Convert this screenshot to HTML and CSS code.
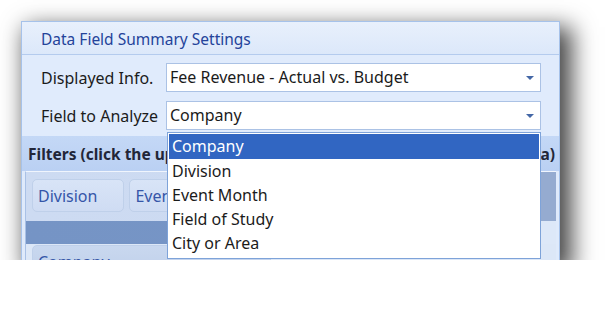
FILE: index.html
```html
<!DOCTYPE html>
<html lang="en">
<head>
  <meta charset="UTF-8">
  <meta name="viewport" content="width=device-width, initial-scale=1.0">
  <title>Data Field Summary Settings</title>
  <link rel="stylesheet" href="styles.css">
</head>
<body>
  <!-- Settings panel -->
  <div class="panel">
    <div class="panel-head">Data Field Summary Settings</div>

    <div class="settings">
      <div class="field-row">
        <span class="label">Displayed Info.</span>
        <div class="combo">
          <span class="combo-text">Fee Revenue - Actual vs. Budget</span>
          <span class="arrow"></span>
        </div>
      </div>
      <div class="field-row">
        <span class="label">Field to Analyze</span>
        <div class="combo">
          <span class="combo-text">Company</span>
          <span class="arrow"></span>
          <!-- open list -->
          <ul class="dropdown">
            <li class="selected">Company</li>
            <li>Division</li>
            <li>Event Month</li>
            <li>Field of Study</li>
            <li>City or Area</li>
          </ul>
        </div>
      </div>
    </div>

    <!-- Filters -->
    <div class="filters-head">
      <span>Filters (click the up arrow to sort;</span>
      <span>drag to reorder the criteria)</span>
    </div>
    <div class="filters-body">
      <div class="chip-row">
        <span class="chip">Division</span>
        <span class="chip">Event Month</span>
        <span class="chip">Field of Study</span>
      </div>
      <div class="band"></div>
      <div class="chip-row second">
        <span class="chip">Company</span>
      </div>
    </div>
  </div>
</body>
</html>
```

FILE: styles.css
```css
/* General styling */
body {
  margin: 0;
  padding: 21px 0 0 21px;
  background-color: #ffffff;
  font-family: "Noto Sans", sans-serif;
  font-size: 16px;
}

/* Panel */
.panel {
  position: relative;
  width: 539px;
  height: 239px;
  box-sizing: border-box;
  border: 1px solid #a6c2ea;
  border-bottom: none;
  background-color: #dfeafb;
  overflow: hidden;
  box-shadow: 8px 10px 22px 4px rgba(0, 0, 0, 0.72);
}

.panel-head {
  height: 32px;
  line-height: 34px;
  padding-left: 19px;
  font-size: 15.5px;
  color: #24439a;
  background: linear-gradient(#e8f0fc, #dce8fa);
  border-bottom: 1px solid #b4cbee;
}

/* Settings rows */
.settings {
  display: flex;
  flex-direction: column;
  gap: 9px;
  padding: 8px 18px 6px 19px;
  background-color: #e0ebfc;
}

.field-row {
  display: flex;
  align-items: center;
}

.label {
  width: 125px;
  color: #1b1b1b;
}

.combo {
  position: relative;
  flex: 1;
  height: 29px;
  box-sizing: border-box;
  border: 1px solid #abc2e5;
  background-color: #ffffff;
  display: flex;
  align-items: center;
  padding-left: 3px;
  color: #1b1b1b;
}

.combo-text {
  flex: 1;
  line-height: 27px;
}

.arrow {
  width: 0;
  height: 0;
  margin-right: 6px;
  border-left: 4px solid transparent;
  border-right: 4px solid transparent;
  border-top: 4px solid #4467a6;
}

/* Open list */
.dropdown {
  position: absolute;
  top: 30px;
  left: 0;
  right: -1px;
  height: 127px;
  box-sizing: border-box;
  margin: 0;
  padding: 1px;
  list-style: none;
  background-color: #ffffff;
  border: 1px solid #7ea3d9;
  z-index: 2;
}

.dropdown li {
  height: 24px;
  line-height: 24px;
  padding-left: 3px;
  color: #1b1b1b;
}

.dropdown li.selected {
  height: 25px;
  line-height: 25px;
  background-color: #3166c2;
  color: #ffffff;
}

/* Filters */
.filters-head {
  display: flex;
  justify-content: space-between;
  height: 35px;
  line-height: 36px;
  padding: 0 4px 0 6px;
  overflow: hidden;
  white-space: nowrap;
  font-size: 15.5px;
  font-weight: bold;
  color: #222638;
  background: linear-gradient(#c4d8f6, #bad0f3);
}

.filters-body {
  margin: 0 3px;
  border-top: 1px solid #f0f5fd;
  border-left: 1px solid #a9c1e6;
  background-color: #dce7f7;
}

.chip-row {
  display: flex;
  gap: 5px;
  padding: 7px 6px 9px;
  background: linear-gradient(to right, #cddbf2 0%, #cbd9f1 80%, #95abd0 84%);
}

.chip-row.second {
  padding: 1px 6px 0;
  background: #dce7f7;
}

.chip {
  height: 33px;
  line-height: 32px;
  box-sizing: border-box;
  padding: 0 26px 0 5px;
  border: 1px solid #bfd0ea;
  border-radius: 5px;
  background: linear-gradient(#d8e4f7, #cfdcf3);
  color: #3556a8;
  white-space: nowrap;
}

.chip-row.second .chip {
  padding-right: 160px;
  background: linear-gradient(#c9d8ef, #bfcfea);
}

.band {
  height: 23px;
  background: linear-gradient(to right, #7594c5 0%, #7896c6 84%, #dde8f8 86%);
}
```
